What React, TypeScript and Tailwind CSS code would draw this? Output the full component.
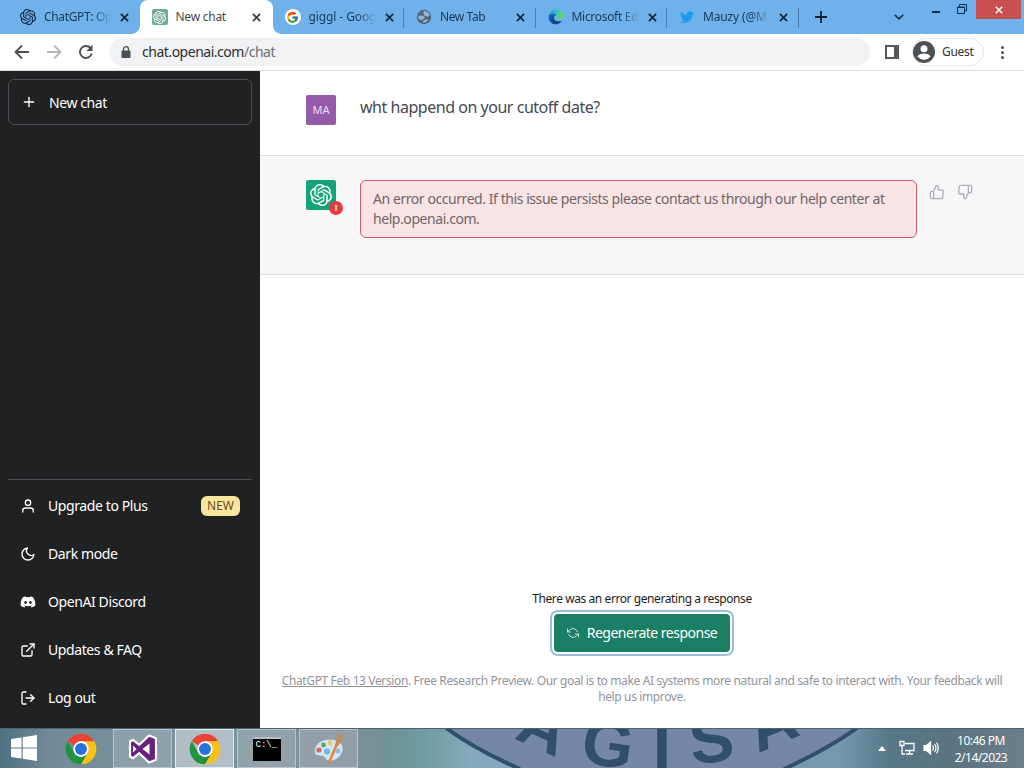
import * as React from 'react';
import { clsx } from 'clsx';
import {
  FiExternalLink,
  FiLogOut,
  FiMoon,
  FiPlus,
  FiRefreshCw,
  FiThumbsDown,
  FiThumbsUp,
  FiUser,
} from 'react-icons/fi';
import { FaDiscord, FaTwitter } from 'react-icons/fa';
import { FcGoogle } from 'react-icons/fc';
import { SiOpenai } from 'react-icons/si';

/* ---------- icons ---------- */

function CloseIcon({ className }: { className?: string }) {
  return (
    <svg viewBox="0 0 10 10" className={className} fill="none" stroke="currentColor" strokeWidth="1.9">
      <path d="M1 1l8 8M9 1l-8 8" />
    </svg>
  );
}

function GlobeIcon() {
  return (
    <svg viewBox="0 0 16 16" className="size-4">
      <circle cx="8" cy="8" r="7.2" fill="#53657a" />
      <path d="M1.800 7.500C3.500 6.200 6 6 7.600 7.200c1.300 1 1.800 1.700.600 2.300-1.500.500-1.200 1.500-2.700 1.500-1.600-.200-3.400-1.500-3.700-3.500z" fill="#8fb4d8" />
      <path d="M8 2c2.400-.1 4.600 1.300 5.500 3.500.3.900-.6 2.200-1.900 1.900-1.400-.400-3.300-.1-3.600-1.600C7.800 4.500 6.300 3.500 8 2zM7.500 11.800c1.300-.4 2.300-1.900 4.800-1.300-.7 1.700-2.400 3-4.600 3.200-.9-.4-1.100-1.600-.2-1.900z" fill="#8fb4d8" />
    </svg>
  );
}

function EdgeIcon() {
  return (
    <svg viewBox="0 0 16 16" className="size-4">
      <defs>
        <linearGradient id="edgeTop" x1="0" y1="0" x2="1" y2="0.3">
          <stop offset="0" stopColor="#1c8fd8" />
          <stop offset="0.55" stopColor="#2fc0c4" />
          <stop offset="1" stopColor="#63d65c" />
        </linearGradient>
      </defs>
      <path d="M.5 7.500C1 3.300 4.200.5 8.200.5c4.300 0 7.300 3 7.300 6.200 0 2.300-1.700 3.900-3.900 3.900-1.800 0-2.700-.7-2.300-1.300.9-1.300.3-4.500-3.300-4.500C3 4.800 1 6.300.5 7.500z" fill="url(#edgeTop)" />
      <path d="M.5 7.500C1.200 5.700 3.400 4.600 5.600 4.800 7 4.900 8 5.500 8.600 6.300 6.800 6 5.800 7.300 5.900 8.700c.2 2.600 3 4.600 6.800 3.400.8-.3 1.200.1.800.6A7.500 7.500 0 0 1 .5 7.500z" fill="#0f5fc2" />
      <path d="M3.500 13.900C2.300 11 3.200 7.400 6.400 6.700c-.6.700-.7 1.500-.5 2.500.4 2.400 3 4 6.800 2.900-1.600 3.300-6 4.300-9.200 1.800z" fill="#114a8b" />
    </svg>
  );
}

function ChromeIcon() {
  return (
    <svg viewBox="0 0 48 48" className="size-8">
      <path d="M24 24L4.080 12.500A23 23 0 0 1 43.920 12.500H24z" fill="#ea4335" />
      <path d="M24 12.500H43.920A23 23 0 0 1 24 47L33.960 29.750z" fill="#fbc116" />
      <path d="M4.080 12.500L14.040 29.750 24 35.500 33.960 29.750 24 47A23 23 0 0 1 4.080 12.500z" fill="#229342" />
      <path d="M24 12.500L33.960 29.750A11.500 11.500 0 0 1 14.040 29.750z" fill="#fff" />
      <circle cx="24" cy="24" r="11.500" fill="#fff" />
      <circle cx="24" cy="24" r="9" fill="#2a70dc" />
    </svg>
  );
}

function VisualStudioIcon() {
  return (
    <svg viewBox="0 0 32 32" className="size-8">
      <path
        d="M22 2.500l7 2.700v21.600l-7 2.700-9.700-9.300-6.300 5L3 23.500v-15L6 6.800l6.300 5z"
        fill="#68217a"
        stroke="#fff"
        strokeWidth="2.200"
        strokeLinejoin="round"
      />
      <path d="M22.500 10.500v11L15.500 16zM6 12.500v7L9.500 16z" fill="#fff" />
    </svg>
  );
}

function WindowsIcon() {
  return (
    <svg viewBox="0 0 26 26" className="size-[26px]" fill="#fff">
      <path d="M0 4l10.500-1.600v10H0zM11.700 2.200L26 0v12.400H11.700zM0 13.600h10.500v10L0 22zM11.700 13.600H26V26l-14.300-2.200z" />
    </svg>
  );
}

function PaintIcon() {
  return (
    <svg viewBox="0 0 32 32" className="size-8">
      <path d="M1.500 18C2 10.500 9 6 17 6.300c8 .2 13.500 4.500 13 10-.5 6.500-7 12.200-14 11.700-3.500-.3-3-3-5-4.200-3-1.800-10 .5-9.500-5.800z" fill="#d3e8f6" stroke="#83a9c6" strokeWidth=".8" />
      <circle cx="6" cy="17" r="2.600" fill="#cf6b5b" />
      <circle cx="10.500" cy="12" r="2.400" fill="#62a267" />
      <circle cx="17" cy="10" r="2.400" fill="#f2c84b" />
      <circle cx="14" cy="18.500" r="3" fill="#72b4e4" />
      <circle cx="25" cy="18" r="2.500" fill="#87c4ea" />
      <path d="M14.500 29.500l8-18.500 2.500 1-8 18.500z" fill="#e58a3c" />
      <path d="M22 11.500l3.500-10c1.500-1.500 5 0 4.300 2.300L25.300 13z" fill="#c88a4d" />
    </svg>
  );
}

function TerminalIcon() {
  return (
    <div className="flex h-6 w-7 flex-col border-t-2 border-[#b9bfc2] bg-black pl-[3px] pt-[1px] font-['Liberation_Mono',monospace] text-[9px] leading-[10px] text-white">
      C:\_
    </div>
  );
}

/* ---------- browser chrome ---------- */

interface TabItem {
  title: string;
  icon: React.ReactNode;
  tracking: string;
  active?: boolean;
  divider?: boolean;
}

const tabs: TabItem[] = [
  { title: 'ChatGPT: Op', icon: <SiOpenai className="size-4 text-[#10233d]" />, tracking: 'tracking-[-0.35px]' },
  {
    title: 'New chat',
    icon: (
      <span className="flex size-4 items-center justify-center rounded-[2px] bg-[#75a899] text-white">
        <SiOpenai className="size-[13px]" />
      </span>
    ),
    tracking: 'tracking-[-0.25px]',
    active: true,
  },
  {
    title: 'giggl - Goog',
    icon: (
      <span className="flex size-4 items-center justify-center rounded-full bg-white">
        <FcGoogle className="size-[13px]" />
      </span>
    ),
    tracking: 'tracking-[-0.1px]',
    divider: true,
  },
  { title: 'New Tab', icon: <GlobeIcon />, tracking: 'tracking-[-0.4px]', divider: true },
  { title: 'Microsoft Ed', icon: <EdgeIcon />, tracking: 'tracking-[-0.3px]', divider: true },
  {
    title: 'Mauzy (@M',
    icon: <FaTwitter className="size-[14px] text-[#1d9bf0]" />,
    tracking: 'tracking-[-0.15px]',
    divider: true,
  },
];

function Tab({ title, icon, tracking, active, divider }: TabItem) {
  return (
    <div
      className={clsx(
        'relative flex h-full shrink-0 items-center pl-3',
        active ? 'w-[133px] rounded-t-lg bg-white' : 'w-[131.5px]',
      )}
    >
      <span className="flex w-4 shrink-0 justify-center">{icon}</span>
      <span
        className={clsx(
          'ml-2 w-[67px] whitespace-nowrap text-[12px]',
          active
            ? 'text-[#45494d]'
            : 'text-[#17395c] [mask-image:linear-gradient(to_right,black_72%,transparent)]',
          tracking,
        )}
      >
        {title}
      </span>
      <CloseIcon className={clsx('ml-[9px] size-[9px]', active ? 'text-[#3c4043]' : 'text-[#10263f]')} />
      {divider && <span className="absolute right-0 top-2 h-5 w-px bg-[#4680b5]" />}
      {active && (
        <>
          <span className="absolute -left-2 bottom-0 size-2 bg-[radial-gradient(circle_at_0_0,transparent_7.500px,white_8px)]" />
          <span className="absolute -right-2 bottom-0 size-2 bg-[radial-gradient(circle_at_100%_0,transparent_7.500px,white_8px)]" />
        </>
      )}
    </div>
  );
}

function TabStrip() {
  return (
    <div className="flex h-[34px] items-start bg-[#6fb1ea] pl-2">
      <div className="flex h-[34px]">
        {tabs.map((tab) => (
          <Tab key={tab.title} {...tab} />
        ))}
      </div>
      <svg viewBox="0 0 12 12" className="ml-[16.500px] mt-[11px] size-3 stroke-[#0c1f33] stroke-[1.800]" fill="none">
        <path d="M6 0v12M0 6h12" />
      </svg>
      <svg viewBox="0 0 10 6" className="ml-[67px] mt-[14px] h-[6px] w-[10px] stroke-[#123a62] stroke-[1.800]" fill="none">
        <path d="M.8.8L5 4.800 9.200.8" />
      </svg>
      <span className="ml-[28px] mt-[11px] h-[2px] w-2 bg-[#0d2f52]" />
      <svg viewBox="0 0 10 10" className="ml-[17px] mt-[4px] size-[10px] stroke-[#0d2f52]" fill="none">
        <path d="M.5 3h7v6.500h-7zM.5 3.500h7M2.500 3V.5h7V7H7.500" />
      </svg>
      <span className="ml-[9px] flex h-[19px] w-[45px] items-center justify-center bg-[#c8504f] text-white">
        <CloseIcon className="size-2" />
      </span>
    </div>
  );
}

function Toolbar() {
  return (
    <div className="flex h-[37px] items-center border-b border-[#dadcde] bg-white">
      <svg viewBox="0 0 16 16" className="ml-[14px] size-4 stroke-[#4d5054] stroke-[1.800]" fill="none">
        <path d="M15 8H2M8 1.500L1.500 8 8 14.500" />
      </svg>
      <svg viewBox="0 0 16 16" className="ml-4 size-4 stroke-[#b4b6b8] stroke-[1.800]" fill="none">
        <path d="M1 8h13M8 1.500L14.500 8 8 14.500" />
      </svg>
      <svg viewBox="0 0 16 16" className="ml-4 size-4" fill="none">
        <path d="M13.800 9.500A6 6 0 1 1 12.500 4" stroke="#4d5054" strokeWidth="1.900" />
        <path d="M14.500.8V7H8.300z" fill="#4d5054" />
      </svg>
      <div className="ml-[15px] flex h-7 w-[761px] items-center rounded-full bg-[#f1f2f4] pl-3">
        <svg viewBox="0 0 10 12" className="h-3 w-[10px]">
          <path d="M2.500 5V3.200a2.500 2.500 0 0 1 5 0V5" fill="none" stroke="#4d5054" strokeWidth="1.300" />
          <rect x=".5" y="4.500" width="9" height="7.500" rx="1" fill="#4d5054" />
        </svg>
        <span className="ml-[11px] pb-px text-[14px] tracking-[-0.480px] text-[#2b2e31]">
          chat.openai.com<span className="text-[#6b6f73]">/chat</span>
        </span>
      </div>
      <svg viewBox="0 0 14 14" className="ml-[15px] size-[14px]">
        <path d="M1 1h12v12H1z" fill="none" stroke="#55585c" strokeWidth="2" />
        <path d="M9 1h4v12H9z" fill="#55585c" />
      </svg>
      <div className="ml-[13px] flex h-7 w-[72px] items-center rounded-full border border-[#e6e7e9]">
        <svg viewBox="0 0 22 22" className="size-[22px] shrink-0">
          <circle cx="11" cy="11" r="11" fill="#4d5054" />
          <circle cx="11" cy="7.800" r="3.500" fill="#fff" />
          <path d="M4.500 15.500c1-2.200 3.800-3 6.500-3s5.500.8 6.500 3c-1.500 2-3.800 3.200-6.500 3.200s-5-1.200-6.500-3.200z" fill="#fff" />
        </svg>
        <span className="ml-[7px] text-[12px] tracking-[-0.300px] text-[#303336]">Guest</span>
      </div>
      <div className="ml-[17px] flex flex-col gap-[2px]">
        <span className="size-[3px] rounded-full bg-[#4d5054]" />
        <span className="size-[3px] rounded-full bg-[#4d5054]" />
        <span className="size-[3px] rounded-full bg-[#4d5054]" />
      </div>
    </div>
  );
}

/* ---------- chat app ---------- */

const menu = [
  { label: 'Upgrade to Plus', icon: FiUser, badge: 'NEW' },
  { label: 'Dark mode', icon: FiMoon },
  { label: 'OpenAI Discord', icon: FaDiscord },
  { label: 'Updates & FAQ', icon: FiExternalLink },
  { label: 'Log out', icon: FiLogOut },
];

function Sidebar() {
  return (
    <aside className="flex w-[260px] shrink-0 flex-col bg-[#202123] px-2 pt-2 text-[14px] text-white">
      <button className="flex h-[46px] shrink-0 items-center gap-3 rounded-md border border-[#4d4e51] px-3">
        <FiPlus className="size-4" />
        <span className="tracking-[-0.400px]">New chat</span>
      </button>
      <nav className="mt-auto flex flex-col border-t border-[#4d4e51] pb-1.5 pt-[2px]">
        {menu.map(({ label, icon: Icon, badge }) => (
          <a key={label} className="flex h-12 items-center px-3">
            <Icon className="size-4 shrink-0" />
            <span className="ml-3 pb-px tracking-[-0.400px]">{label}</span>
            {badge && (
              <span className="ml-auto rounded-md bg-[#fbe69e] px-1.5 text-[12px] leading-5 text-[#6b4a1c]">
                {badge}
              </span>
            )}
          </a>
        ))}
      </nav>
    </aside>
  );
}

function Conversation() {
  return (
    <main className="flex min-w-0 flex-1 flex-col bg-white">
      <div className="flex h-[85px] shrink-0 items-start border-b border-[#dfdfe1] pl-[46px] pt-6">
        <span className="flex size-[30px] items-center justify-center rounded-[2px] bg-[#945bab] text-[11px] text-[#f0dff5]">
          MA
        </span>
        <p className="ml-6 text-[16px] leading-6 tracking-[-0.470px] text-[#464950]">wht happend on your cutoff date?</p>
      </div>
      <div className="flex h-[119px] shrink-0 items-start border-b border-[#dfdfe1] bg-[#f7f7f7] pl-[46px] pt-6">
        <div className="relative flex size-[30px] shrink-0 items-center justify-center rounded-[2px] bg-[#14a37a] text-white">
          <SiOpenai className="size-[22px]" />
          <span className="absolute -bottom-[5px] -right-[7px] flex size-[14px] items-center justify-center rounded-full bg-[#e53b3e] text-[9px] font-bold text-white">
            !
          </span>
        </div>
        <div className="ml-6 h-[58px] w-[557px] rounded-md border border-[#cb5b6d] bg-[#f8e4e4] px-3 py-2 text-[14px] leading-5 tracking-[-0.435px] text-[#70666a]">
          An error occurred. If this issue persists please contact us through our help center at help.openai.com.
        </div>
        <div className="ml-3 mt-1 flex gap-[12px] text-[#adaeba]">
          <FiThumbsUp className="size-4" />
          <FiThumbsDown className="size-4" />
        </div>
      </div>
      <footer className="mt-auto flex flex-col items-center pb-[23px]">
        <p className="text-[12px] leading-4 tracking-[-0.420px] text-[#1d1d20]">
          There was an error generating a response
        </p>
        <button className="mt-[7px] flex h-[38px] w-[176px] items-center justify-center gap-2 rounded bg-[#1a7f64] text-[14px] tracking-[-0.500px] text-white ring-2 ring-[#9dbce0] ring-offset-2">
          <FiRefreshCw className="size-3 -scale-x-100" strokeWidth={1.5} />
          <span className="pb-px">Regenerate response</span>
        </button>
        <p className="mt-[21px] text-center text-[12px] leading-4 tracking-[-0.370px] text-[#939499]">
          <a className="underline">ChatGPT Feb 13 Version</a>. Free Research Preview. Our goal is to make AI systems
          more natural and safe to interact with. Your feedback will
          <br />
          help us improve.
        </p>
      </footer>
    </main>
  );
}

/* ---------- desktop taskbar ---------- */

// wallpaper seal showing through the translucent bar
function Wallpaper() {
  return (
    <svg viewBox="0 0 1024 40" className="absolute inset-0 h-10 w-full">
      <defs>
        <linearGradient id="glass">
          <stop offset="0" stopColor="#4d7080" />
          <stop offset="0.05" stopColor="#738b98" />
          <stop offset="0.2" stopColor="#7d949d" />
          <stop offset="0.34" stopColor="#818e98" />
          <stop offset="0.38" stopColor="#719294" />
          <stop offset="0.41" stopColor="#6f9a9f" />
          <stop offset="0.46" stopColor="#86a9bd" />
          <stop offset="0.82" stopColor="#7797ad" />
          <stop offset="0.87" stopColor="#577687" />
          <stop offset="0.93" stopColor="#5a7480" />
          <stop offset="1" stopColor="#6c7f89" />
        </linearGradient>
      </defs>
      <rect width="1024" height="40" fill="url(#glass)" />
      <path d="M445 0Q475 22 518 40H785Q830 22 858 0z" fill="#7487a4" />
      <path d="M446 0Q476 22 520 41M784 41Q828 21 857 0" fill="none" stroke="#304f68" strokeWidth="4" />
      <g fill="#304f68" fontFamily="Liberation Sans, sans-serif" fontWeight="bold" fontSize="66" textAnchor="middle">
        <text transform="translate(535 20) rotate(24)">A</text>
        <text transform="translate(605 38) rotate(8)">G</text>
        <text transform="translate(662 46)">I</text>
        <text transform="translate(714 34) rotate(-7)">S</text>
        <text transform="translate(780 16) rotate(-23)">A</text>
      </g>
      <path d="M0 .5h1024" stroke="#4b6371" />
    </svg>
  );
}

const apps = [
  { name: 'chrome', icon: <ChromeIcon />, frame: '' },
  { name: 'visual-studio', icon: <VisualStudioIcon />, frame: 'border border-[#b9c5cb] bg-white/15' },
  { name: 'chrome-window', icon: <ChromeIcon />, frame: 'border border-[#e6ecef] bg-white/40' },
  { name: 'terminal', icon: <TerminalIcon />, frame: 'border border-[#b9c5cb] bg-white/15' },
  { name: 'paint', icon: <PaintIcon />, frame: 'border border-[#b9c5cb] bg-white/15' },
];

function Taskbar() {
  return (
    <div className="relative h-10 shrink-0 overflow-hidden">
      <Wallpaper />
      <div className="relative flex h-full items-center">
        <span className="ml-[11px] mr-[14px]">
          <WindowsIcon />
        </span>
        <div className="flex h-full gap-[3px] pt-px">
          {apps.map((app) => (
            <span key={app.name} className={clsx('flex h-[39px] w-[59px] items-center justify-center', app.frame)}>
              {app.icon}
            </span>
          ))}
        </div>
        <div className="ml-auto flex items-center text-white">
          <svg viewBox="0 0 8 5" className="h-[5px] w-2" fill="#fff">
            <path d="M4 0l4 5H0z" />
          </svg>
          <svg viewBox="0 0 16 16" className="ml-[13px] size-4" fill="none" stroke="#fff" strokeWidth="1.300">
            <path d="M6 3.500h9v7H6M10.500 10.500V14M7 14h7M1 1.500h4v4H1zM3 5.500V14h3" />
          </svg>
          <svg viewBox="0 0 16 16" className="ml-2 size-4" fill="none" stroke="#fff" strokeWidth="1.200">
            <path d="M1 5.500h2.500L7.500 2v12L3.500 10.500H1z" fill="#fff" />
            <path d="M9.500 5.500q2 2.500 0 5M11.500 4q3 4 0 8M13.500 2.500q3.500 5.500 0 11" />
          </svg>
          <div className="ml-[13px] mr-[14px] w-[58px] whitespace-nowrap pt-px text-center text-[12px] leading-[17px] tracking-[-0.500px]">
            10:46 PM
            <br />
            2/14/2023
          </div>
        </div>
      </div>
    </div>
  );
}

export default function App() {
  return (
    <div className="flex h-[768px] w-[1024px] flex-col overflow-hidden font-['Noto_Sans','Open_Sans',sans-serif]">
      <TabStrip />
      <Toolbar />
      <div className="flex min-h-0 flex-1">
        <Sidebar />
        <Conversation />
      </div>
      <Taskbar />
    </div>
  );
}
